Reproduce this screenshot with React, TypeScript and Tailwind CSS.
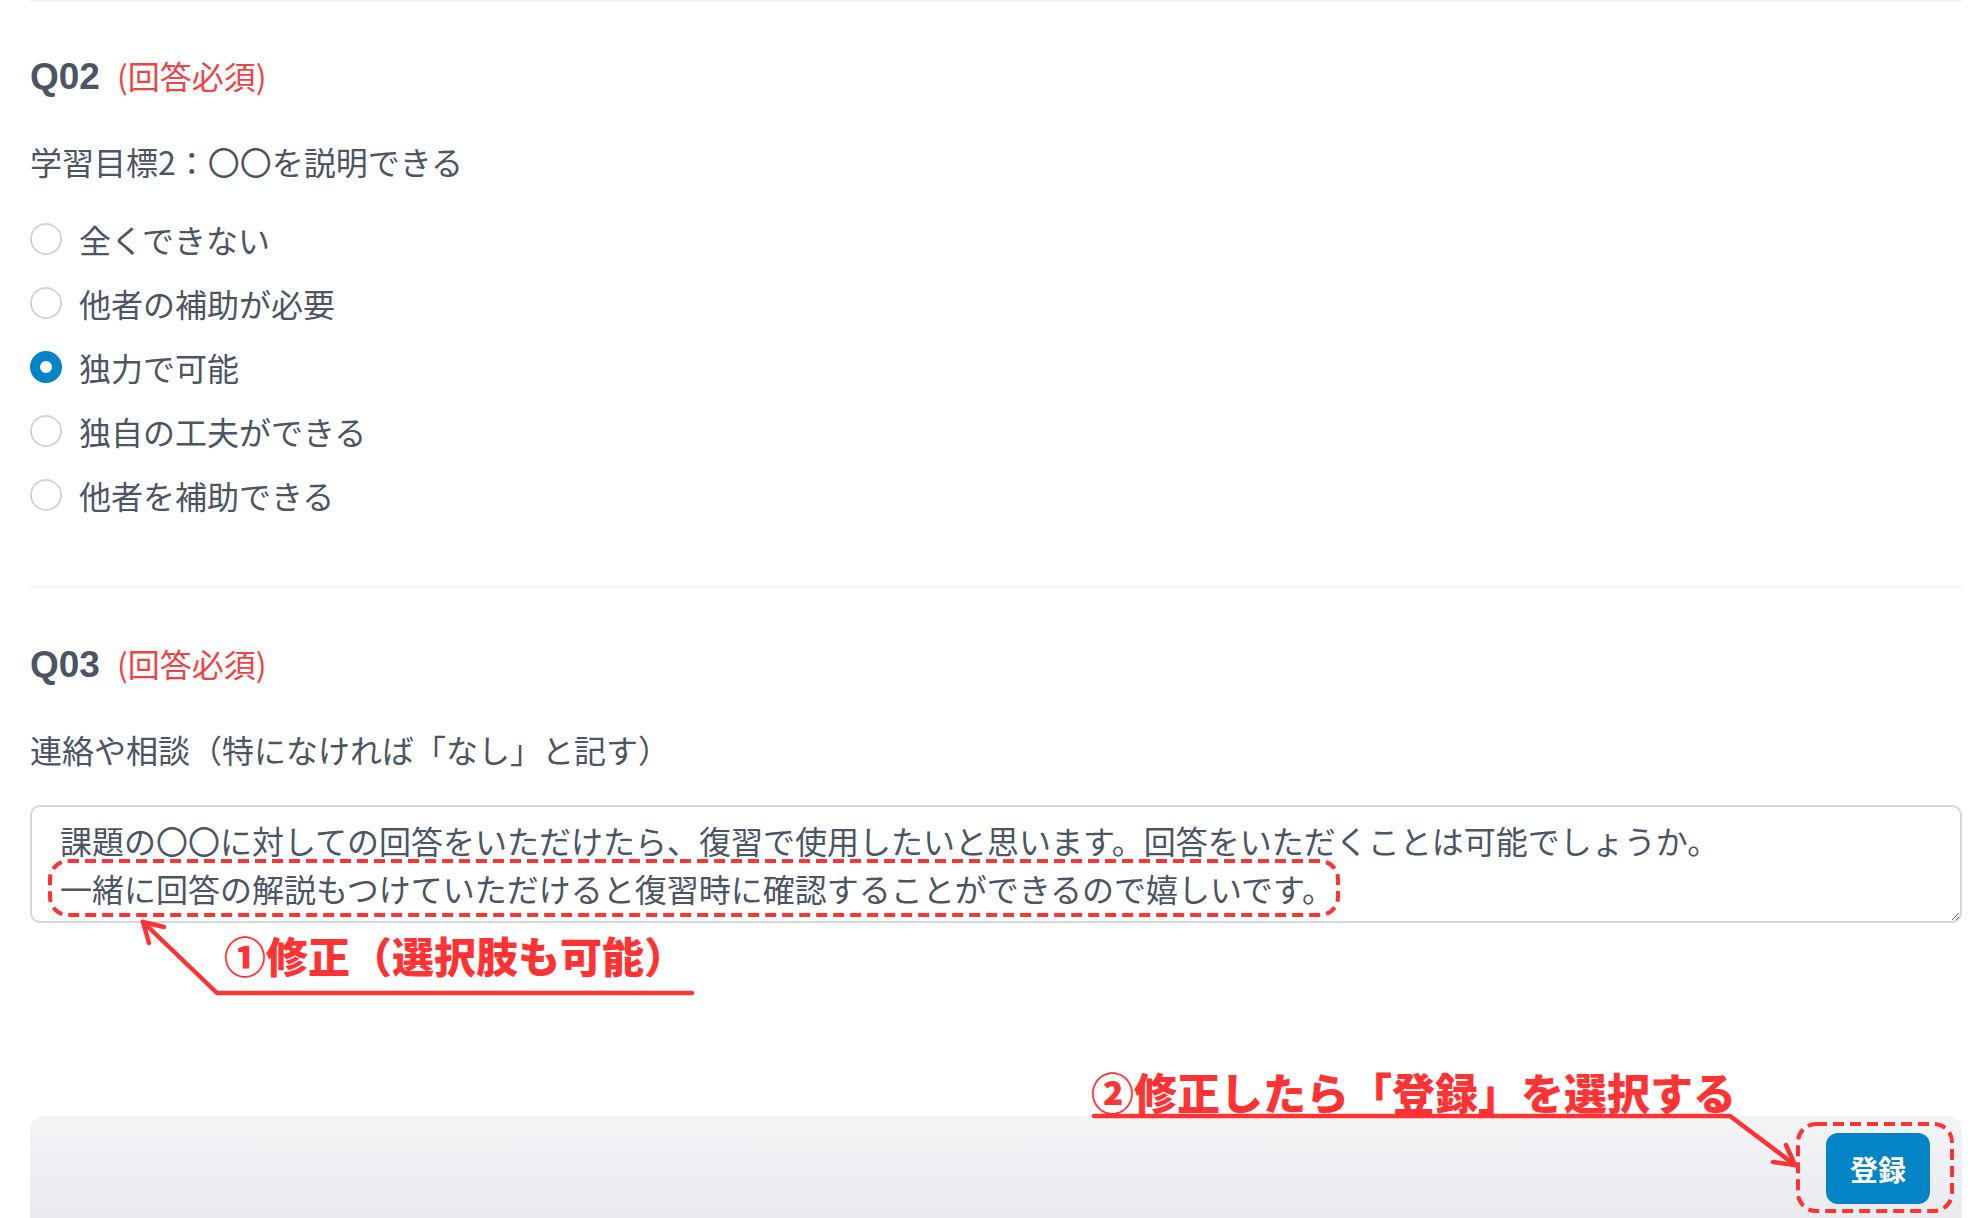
import React from "react";

const options = [
  "全くできない",
  "他者の補助が必要",
  "独力で可能",
  "独自の工夫ができる",
  "他者を補助できる",
];

const answer =
  "課題の〇〇に対しての回答をいただけたら、復習で使用したいと思います。回答をいただくことは可能でしょうか。\n一緒に回答の解説もつけていただけると復習時に確認することができるので嬉しいです。";

const jp = "font-['Noto_Sans_CJK_JP','Noto_Sans',sans-serif]";

const QuestionTitle = ({ no }: { no: string }) => (
  <div className="flex items-baseline h-[48px] leading-[46px]">
    <span className="font-['Liberation_Sans',sans-serif] font-bold text-[37px] text-[#4b5563]">
      {no}
    </span>
    <span className={`${jp} ml-[17px] text-[32px] text-[#ef4444]`}>
      (回答必須)
    </span>
  </div>
);

const Radio = ({ label, checked }: { label: string; checked: boolean }) => (
  <label className="flex items-center gap-[17px] h-[64px] cursor-pointer">
    {checked ? (
      <span className="w-[32px] h-[32px] rounded-full bg-[#0284c7] flex items-center justify-center">
        <span className="w-[12px] h-[12px] rounded-full bg-white" />
      </span>
    ) : (
      <span className="w-[32px] h-[32px] rounded-full border-2 border-[#d1d5db] bg-white" />
    )}
    <span className={`${jp} text-[32px] leading-[48px] text-[#4b5563]`}>
      {label}
    </span>
  </label>
);

const App = () => {
  const selected = 2;

  return (
    <div className="relative w-full h-[1218px] overflow-hidden bg-white">
      <div className="pl-[30px] pr-[24px]">
        <div className="border-t-2 border-[#f3f4f6]" />

        {/* Q02 */}
        <div className="pt-[50px]">
          <QuestionTitle no="Q02" />
          <p className={`${jp} mt-[37px] text-[32px] leading-[48px] text-[#4b5563]`}>
            学習目標2：〇〇を説明できる
          </p>
          <div className="mt-[22px] flex flex-col">
            {options.map((o, i) => (
              <Radio key={o} label={o} checked={i === selected} />
            ))}
          </div>
        </div>

        <div className="mt-[59px] h-[2px] bg-[#f3f4f6]" />

        {/* Q03 */}
        <div className="pt-[52px]">
          <QuestionTitle no="Q03" />
          <p className={`${jp} mt-[37px] text-[32px] leading-[48px] text-[#4b5563]`}>
            連絡や相談（特になければ「なし」と記す）
          </p>
          <textarea
            rows={2}
            defaultValue={answer}
            className={`${jp} mt-[32px] block w-full h-[118px] border-2 border-[#d4d7dc] rounded-[10px] pl-[28px] pr-[20px] pt-[9px] pb-[9px] text-[32px] leading-[48px] text-[#4b5563] outline-none`}
          />
        </div>

        {/* footer */}
        <div className="mt-[193px] h-[140px] rounded-t-[14px] bg-linear-to-b from-[#f3f4f6] to-[#e5e7eb] flex justify-end pt-[17px] pr-[32px]">
          <button
            className={`${jp} w-[104px] h-[71px] rounded-[12px] bg-[#0284c7] text-white font-bold text-[28px]`}
          >
            登録
          </button>
        </div>
      </div>

      {/* annotations */}
      <p className={`${jp} absolute left-[224px] top-[930px] text-[42px] leading-[50px] font-black text-[#ff3333] whitespace-nowrap`}>
        ①修正（選択肢も可能）
      </p>
      <p className={`${jp} absolute left-[1091px] top-[1066px] text-[43px] leading-[50px] font-black text-[#ff3333] whitespace-nowrap`}>
        ②修正したら「登録」を選択する
      </p>

      <svg
        className="absolute left-0 top-0 pointer-events-none"
        width="1986"
        height="1218"
        fill="none"
        stroke="#ff3333"
      >
        <rect x="50" y="861" width="1288" height="54" rx="18" strokeWidth="4" strokeDasharray="11 6" />
        <rect x="1798" y="1124" width="154" height="87" rx="18" strokeWidth="4" strokeDasharray="11 6" />
        <g strokeWidth="4.5" strokeLinecap="round" strokeLinejoin="round">
          <polyline points="692,993 217,993 143,922" />
          <polyline points="149,943 143,922 164,927" />
          <polyline points="1094,1116 1730,1116 1795,1165" />
          <polyline points="1786,1145 1795,1165 1773,1162" />
        </g>
      </svg>
    </div>
  );
};

export default App;
